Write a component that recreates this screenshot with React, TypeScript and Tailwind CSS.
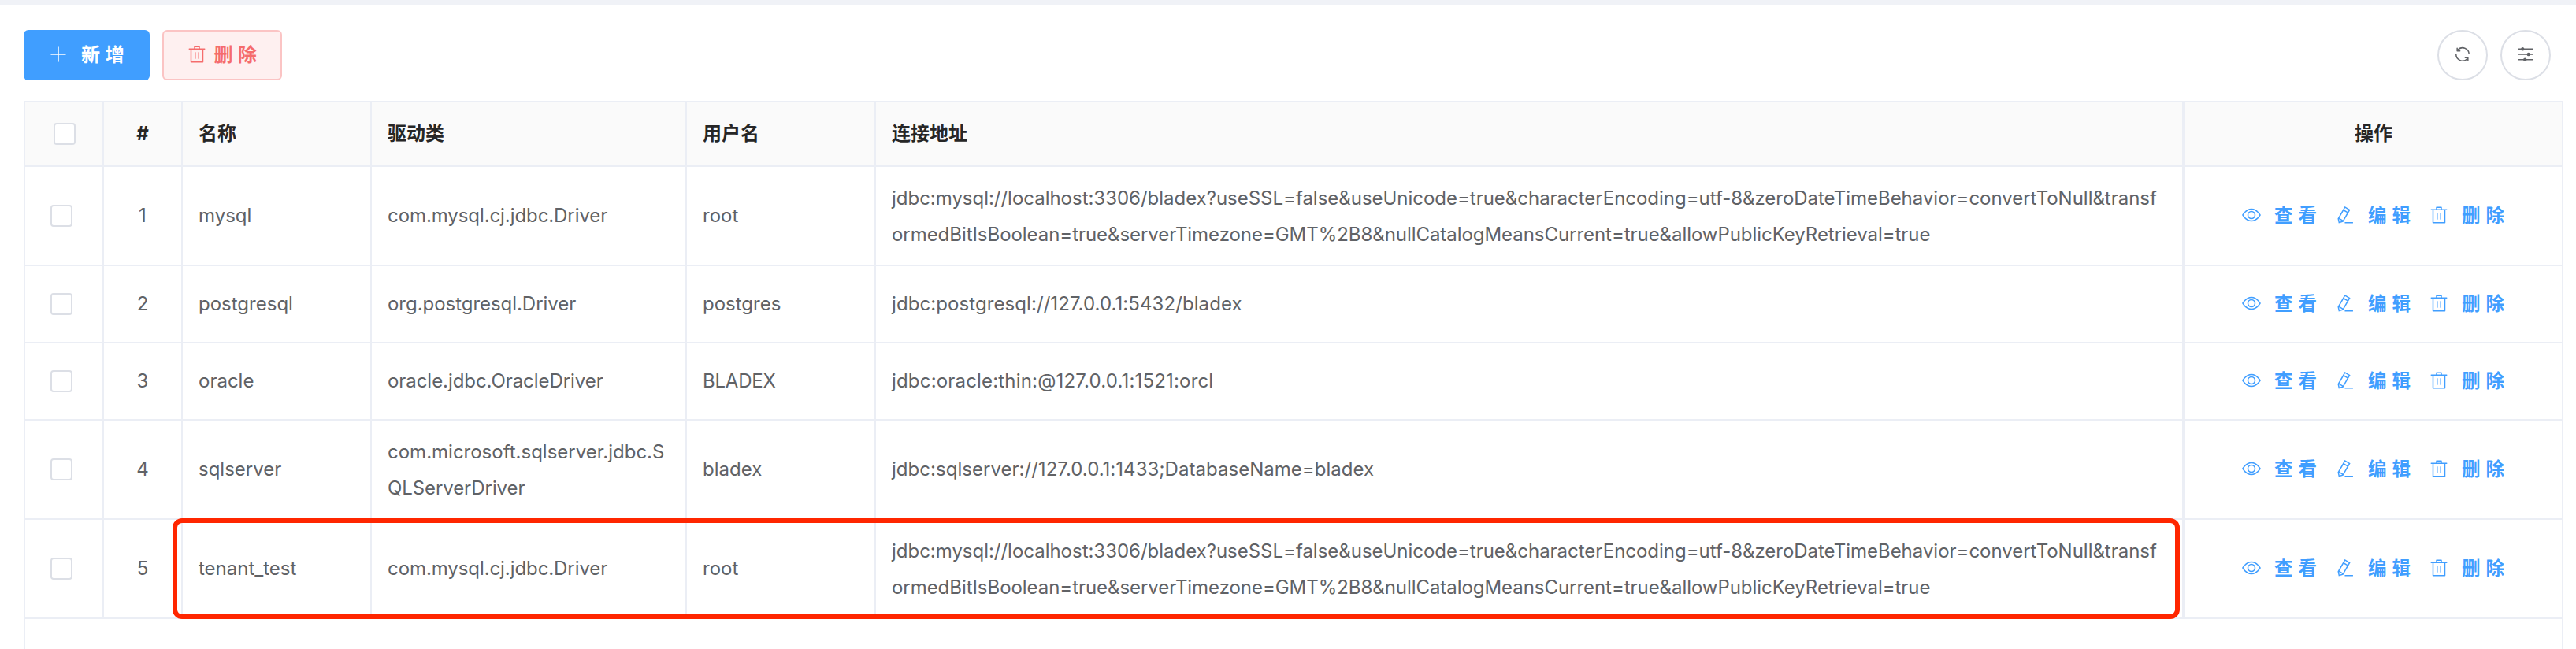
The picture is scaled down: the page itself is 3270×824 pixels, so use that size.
import React from "react";

const PLUS = "M480 480V128a32 32 0 0 1 64 0v352h352a32 32 0 1 1 0 64H544v352a32 32 0 1 1-64 0V544H128a32 32 0 0 1 0-64z";
const TRASH = "M160 256H96a32 32 0 0 1 0-64h256V95.936a32 32 0 0 1 32-32h256a32 32 0 0 1 32 32V192h256a32 32 0 1 1 0 64h-64v672a32 32 0 0 1-32 32H192a32 32 0 0 1-32-32zm448-64v-64H416v64zM224 896h576V256H224zm192-128a32 32 0 0 1-32-32V416a32 32 0 0 1 64 0v320a32 32 0 0 1-32 32m192 0a32 32 0 0 1-32-32V416a32 32 0 0 1 64 0v320a32 32 0 0 1-32 32";
const VIEW = "M512 160c320 0 512 352 512 352S832 864 512 864 0 512 0 512s192-352 512-352m0 64c-225.280 0-384.128 208.064-436.800 288 52.608 79.872 211.456 288 436.800 288 225.280 0 384.128-208.064 436.800-288-52.608-79.872-211.456-288-436.800-288m0 64a224 224 0 1 1 0 448 224 224 0 0 1 0-448m0 64a160.192 160.192 0 0 0-160 160c0 88.192 71.744 160 160 160s160-71.808 160-160-71.744-160-160-160";
const EDIT = "m199.040 672.640 193.984 112 224-387.968-193.920-112-224 388.032zm-23.872 60.160 32.896 148.288 144.896-45.696zM455.040 229.248l193.920 112 56.704-98.112-193.984-112-56.640 98.112zM104.320 708.800l384-665.024 304.768 175.936L409.152 884.800h.064l-248.448 78.336zm384 254.272v-64h448v64z";
const REFRESH = "M771.776 794.880A384 384 0 0 1 128 512h64a320 320 0 0 0 555.712 216.448H654.720a32 32 0 1 1 0-64h149.056a32 32 0 0 1 32 32v148.928a32 32 0 1 1-64 0v-50.560zM276.288 295.616h92.992a32 32 0 0 1 0 64H220.160a32 32 0 0 1-32-32V178.560a32 32 0 0 1 64 0v50.560A384 384 0 0 1 896.128 512h-64a320 320 0 0 0-555.776-216.384z";
const OPERATION = "M389.440 768a96.064 96.064 0 0 1 181.120 0H896v64H570.560a96.064 96.064 0 0 1-181.120 0H128v-64zm192-288a96.064 96.064 0 0 1 181.120 0H896v64H762.560a96.064 96.064 0 0 1-181.120 0H128v-64zm-320-288a96.064 96.064 0 0 1 181.120 0H896v64H442.560a96.064 96.064 0 0 1-181.120 0H128v-64z";

function Icon({ d }: { d: string }) {
  return (
    <svg viewBox="0 0 1024 1024" fill="currentColor" className="mb-0.5 h-6 w-6 shrink-0">
      <path d={d} />
    </svg>
  );
}

type Line = { text: string; tracking?: string };

const MYSQL_URL: Line[] = [
  {
    text: "jdbc:mysql://localhost:3306/bladex?useSSL=false&useUnicode=true&characterEncoding=utf-8&zeroDateTimeBehavior=convertToNull&transf",
    tracking: "tracking-[-0.02px]",
  },
  {
    text: "ormedBitIsBoolean=true&serverTimezone=GMT%2B8&nullCatalogMeansCurrent=true&allowPublicKeyRetrieval=true",
    tracking: "tracking-[-0.05px]",
  },
];
const MYSQL_DRIVER: Line[] = [{ text: "com.mysql.cj.jdbc.Driver", tracking: "tracking-[-0.08px]" }];

const ROWS: { name: string; driver: Line[]; user: Line; url: Line[] }[] = [
  { name: "mysql", driver: MYSQL_DRIVER, user: { text: "root" }, url: MYSQL_URL },
  {
    name: "postgresql",
    driver: [{ text: "org.postgresql.Driver", tracking: "tracking-[-0.04px]" }],
    user: { text: "postgres" },
    url: [{ text: "jdbc:postgresql://127.0.0.1:5432/bladex", tracking: "tracking-[0.08px]" }],
  },
  {
    name: "oracle",
    driver: [{ text: "oracle.jdbc.OracleDriver", tracking: "tracking-[-0.06px]" }],
    user: { text: "BLADEX", tracking: "tracking-[-0.2px]" },
    url: [{ text: "jdbc:oracle:thin:@127.0.0.1:1521:orcl", tracking: "tracking-[0.18px]" }],
  },
  {
    name: "sqlserver",
    driver: [{ text: "com.microsoft.sqlserver.jdbc.S" }, { text: "QLServerDriver", tracking: "tracking-[-0.1px]" }],
    user: { text: "bladex" },
    url: [{ text: "jdbc:sqlserver://127.0.0.1:1433;DatabaseName=bladex", tracking: "tracking-[0.03px]" }],
  },
  { name: "tenant_test", driver: MYSQL_DRIVER, user: { text: "root" }, url: MYSQL_URL },
];

const GRID = "grid grid-cols-[100px_100px_240px_400px_240px_1662px_478px]";
const CELL = "flex flex-col justify-center border-r-2 border-b-2 border-[#ebeef5] whitespace-nowrap";

function Checkbox() {
  return <span className="block h-7 w-7 rounded-[4px] border-2 border-[#dcdfe6] bg-white" />;
}

function Lines({ items }: { items: Line[] }) {
  return (
    <div className={items.length > 1 ? "pt-0.5" : ""}>
      {items.map((line) => (
        <div key={line.text} className={line.tracking}>
          {line.text}
        </div>
      ))}
    </div>
  );
}

function Action({ d, label }: { d: string; label: string }) {
  return (
    <button className="flex w-[119px] items-center font-bold whitespace-nowrap text-[#409eff]">
      <Icon d={d} />
      <span className="ml-[17px] text-[23.5px] tracking-[6.9px]">{label}</span>
    </button>
  );
}

export default function App() {
  return (
    <div className="h-[824px] w-[3270px] overflow-hidden border-t-[6px] border-[#f0f2f7] bg-white font-['Inter','Noto_Sans_CJK_SC',sans-serif] text-2xl leading-[46px] text-[#606266]">
      <div className="flex h-[122px] items-start justify-between pt-8 pr-8 pl-[30px]">
        <div className="flex gap-4">
          <button className="flex h-16 w-40 items-center rounded-[6px] bg-[#409eff] pl-8 font-bold text-white">
            <Icon d={PLUS} />
            <span className="ml-[17px] tracking-[6.7px]">新增</span>
          </button>
          <button className="flex h-16 w-[152px] items-center rounded-[6px] border-2 border-[#fbc4c4] bg-[#fef0f0] pl-[30px] font-bold text-[#f56c6c]">
            <Icon d={TRASH} />
            <span className="ml-[9.5px] tracking-[6.5px]">删除</span>
          </button>
        </div>
        <div className="flex gap-4">
          {[REFRESH, OPERATION].map((d) => (
            <button key={d} className="flex h-16 w-16 items-center justify-center rounded-full border-2 border-[#dcdfe6]">
              <Icon d={d} />
            </button>
          ))}
        </div>
      </div>

      <div className="relative ml-[30px] h-[720px] w-[3224px] border-t-2 border-r-2 border-l-2 border-[#ebeef5]">
        <div className={`${GRID} h-[82px] bg-[#fafafa] font-bold text-[#262626]`}>
          <div className={`${CELL} pl-9`}><Checkbox /></div>
          <div className={`${CELL} items-center`}>#</div>
          <div className={`${CELL} px-5`}>名称</div>
          <div className={`${CELL} px-5`}>驱动类</div>
          <div className={`${CELL} px-5`}>用户名</div>
          <div className={`${CELL} border-r-4 px-5`}>连接地址</div>
          <div className="flex items-center justify-center border-b-2 border-[#ebeef5]">操作</div>
        </div>
        {ROWS.map((r, i) => (
          <div key={r.name} className={`${GRID} ${r.url.length + r.driver.length > 2 ? "h-[126px]" : "h-[98px]"}`}>
            <div className={`${CELL} pl-8`}><Checkbox /></div>
            <div className={`${CELL} items-center`}>{i + 1}</div>
            <div className={`${CELL} px-5`}>{r.name}</div>
            <div className={`${CELL} px-5`}><Lines items={r.driver} /></div>
            <div className={`${CELL} px-5`}><Lines items={[r.user]} /></div>
            <div className={`${CELL} border-r-4 px-5`}><Lines items={r.url} /></div>
            <div className="flex items-center border-b-2 border-[#ebeef5] pl-[72px]">
              <Action d={VIEW} label="查看" />
              <Action d={EDIT} label="编辑" />
              <Action d={TRASH} label="删除" />
            </div>
          </div>
        ))}
        <div className="pointer-events-none absolute top-[528px] left-[187px] h-32 w-[2548px] rounded-[12px] border-[6px] border-[#ff2600]" />
      </div>
    </div>
  );
}
